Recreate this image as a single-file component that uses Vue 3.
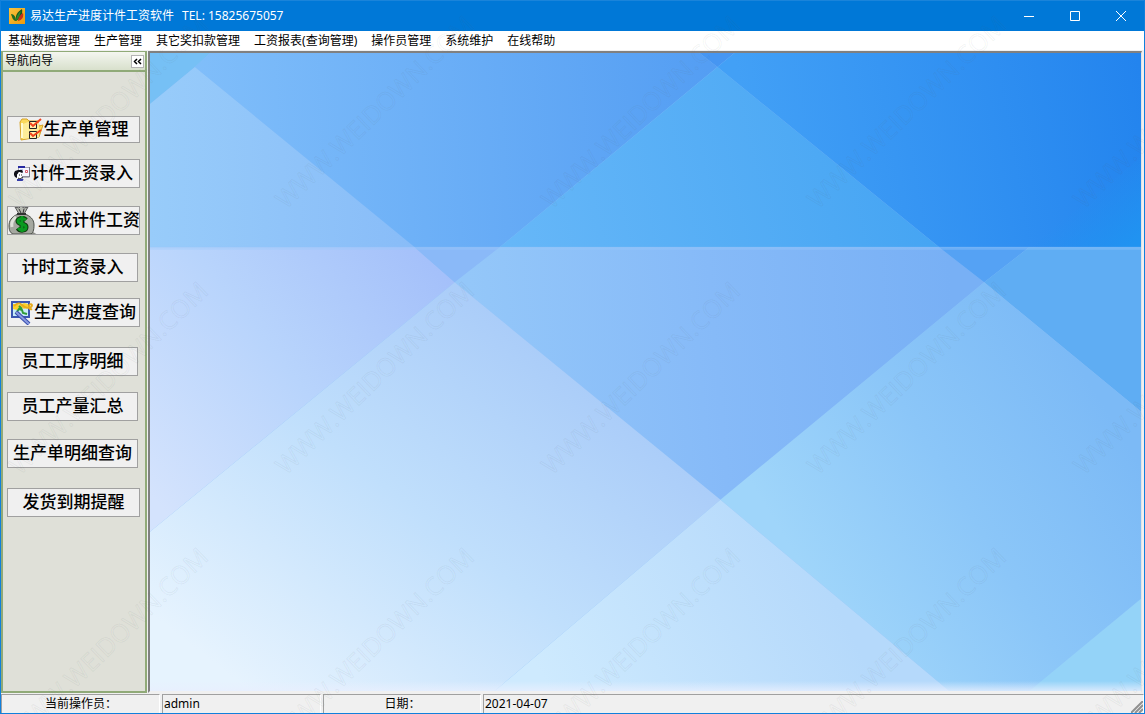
<script setup>
const menus = ['基础数据管理', '生产管理', '其它奖扣款管理', '工资报表(查询管理)', '操作员管理', '系统维护', '在线帮助']

const actions = [
  { label: '生产单管理', icon: 'folder', size: 'wide short', space: 'gap-first' },
  { label: '计件工资录入', icon: 'entry', size: 'wide', space: 'gap-s' },
  { label: '生成计件工资', icon: 'money', size: 'wide', space: 'gap-m' },
  { label: '计时工资录入', icon: '', size: '', space: 'gap-m' },
  { label: '生产进度查询', icon: 'search', size: 'wide', space: 'gap-s' },
  { label: '员工工序明细', icon: '', size: '', space: 'gap-l' },
  { label: '员工产量汇总', icon: '', size: '', space: 'gap-s' },
  { label: '生产单明细查询', icon: '', size: '', space: 'gap-m' },
  { label: '发货到期提醒', icon: '', size: 'wide', space: 'gap-l' }
]

const marks = []
for (let row = 0; row < 4; row++) {
  for (let col = -1; col < 5; col++) marks.push({ x: 19 + col * 266, y: 210 + row * 266 })
}
</script>

<template>
  <div class="window">
    <header class="titlebar">
      <svg class="logo" viewBox="0 0 16 16" aria-hidden="true">
        <defs>
          <linearGradient id="gold" x1="0" y1="0" x2="1" y2="1">
            <stop offset="0" stop-color="#f9c440" /><stop offset="1" stop-color="#ee9a0c" />
          </linearGradient>
        </defs>
        <rect width="16" height="16" fill="url(#gold)" />
        <path d="M2 6c3 0 5 3 5 7C4 13 3 9 2 6z" fill="#1d6b22" />
        <path d="M7 13c-1-5 1-9 6-12 1 5-1 9-6 12z" fill="#17551d" />
        <path d="M9 13c0-4 2-6 5-8 1 4-1 7-5 8z" fill="#c5301c" />
        <path d="M7 13c0-4 2-8 5-10-1 4-2 7-5 10z" fill="#2b8a2d" />
      </svg>
      <h1><span>易达生产进度计件工资软件</span><span>TEL: 15825675057</span></h1>
      <div class="controls">
        <button type="button" aria-label="最小化">
          <svg viewBox="0 0 10 10"><path d="M0 5.5h10" /></svg>
        </button>
        <button type="button" aria-label="最大化">
          <svg viewBox="0 0 10 10"><path d="M.5 .5h9v9h-9z" /></svg>
        </button>
        <button type="button" aria-label="关闭">
          <svg viewBox="0 0 10 10"><path d="M0 0l10 10M10 0L0 10" /></svg>
        </button>
      </div>
    </header>

    <nav class="menubar">
      <button v-for="m in menus" :key="m" type="button">{{ m }}</button>
    </nav>

    <main class="body">
      <aside class="sidebar">
        <div class="side-head">
          <h2>导航向导</h2>
          <button type="button" class="collapse" aria-label="收起">
            <svg viewBox="0 0 9 7"><path d="M4 1L1.500 3.500 4 6M8 1L5.500 3.500 8 6" /></svg>
          </button>
        </div>
        <div class="side-body">
          <button v-for="a in actions" :key="a.label" type="button" class="action" :class="[a.size, a.space, a.icon]">
            <svg v-if="a.icon === 'folder'" class="icon" width="25" height="23" viewBox="0 0 25 23" aria-hidden="true">
              <path d="M1 4l2-3h5l2 2h9l1 5 4-1-4 12-18 3z" fill="#fbd95c" stroke="#d6a32a" />
              <path d="M4 6l5-2 11 1v14L4 21z" fill="#fdec98" />
              <path d="M3 5v15" stroke="#fffad0" stroke-width="2" />
              <path d="M10.500 3.500h7v7h-7zM10.500 13.500h7v7h-7z" fill="#fff2b0" stroke="#222" />
              <path d="M11 5l3 3 8-7M11 15l3 3 8-6" fill="none" stroke="#f0431c" stroke-width="2" />
            </svg>
            <svg v-else-if="a.icon === 'entry'" class="icon" width="17" height="16" viewBox="0 0 17 16" aria-hidden="true">
              <path d="M4.500 1.500h11v9h-11z" fill="#f4f6ff" stroke="#a5a5b2" />
              <path d="M4 0h7v2H4z" fill="#2629a0" />
              <path d="M15.500 1v10H9" fill="none" stroke="#787888" />
              <path d="M6 4h3M6 6h3" stroke="#8898d0" />
              <path d="M11.500 4.500h2v2h-2z" fill="#fff" stroke="#d85868" />
              <path d="M0 7l1-2 3-1h4l1 2-1 1-3-1-2 3v3l-2-1-1-2z" fill="#101018" />
              <path d="M3 9l2-3 3 1v4l-2 2-3-1z" fill="#fff" />
              <path d="M5 9h1M7 9h1M4 12l2 1 3-2" fill="none" stroke="#222" />
              <path d="M3 14h5l1-1" fill="none" stroke="#343ca8" stroke-width="2" />
            </svg>
            <svg v-else-if="a.icon === 'money'" class="icon" width="30" height="30" viewBox="0 0 30 30" aria-hidden="true">
              <path d="M8 29h22l-5-3z" fill="#8b8d86" />
              <path d="M7 1l4 1 2-2 3 2 4-1-4 7h-5z" fill="#b5b8b0" stroke="#555" />
              <path d="M11 3l2 4M16 3l-1 4" stroke="#333" />
              <path d="M10 8C3 11 1 15 1 20c0 5 2 8 5 8h16c3 0 4-4 4-9 0-6-4-9-9-11z" fill="#a5a8a0" stroke="#4c504a" />
              <path d="M8 11c-4 3-5 6-4 10" fill="none" stroke="#dfe1da" stroke-width="3" />
              <path d="M9 8h9" stroke="#333" stroke-width="2" />
              <path d="M18 14c-2-2-8-2-8 1 0 4 8 2 8 6 0 4-6 4-8 1M14 10v16" fill="none" stroke="#10380f" stroke-width="5" />
              <path d="M18 14c-2-2-8-2-8 1 0 4 8 2 8 6 0 4-6 4-8 1M14 10v16" fill="none" stroke="#0a9a20" stroke-width="3" />
            </svg>
            <svg v-else-if="a.icon === 'search'" class="icon" width="23" height="24" viewBox="0 0 23 24" aria-hidden="true">
              <rect x="1" y="1" width="17" height="15" fill="#c8ecf8" stroke="#3a56b0" stroke-width="2" />
              <path d="M2 8V3h4l3 1 4-2 4 1v3l-4 2-3-2-4 3z" fill="#fbd02c" />
              <path d="M5 12l3-4 3 1 1 3 4 1M8 5l3 3" fill="none" stroke="#309c38" stroke-width="2" />
              <path d="M3 5c4-4 6-3 8-1s6 4 9 2c3-3-2-4-2-1 0 2 1 4 3 3" fill="none" stroke="#e8ac1c" stroke-width="2" />
              <path d="M5 11l13 12" stroke="#354cad" stroke-width="4" />
              <path d="M5 11l13 12" stroke="#8a9be0" stroke-width="2" />
            </svg>
            <span>{{ a.label }}</span>
          </button>
        </div>
      </aside>

      <section class="workspace">
        <svg class="wallpaper" viewBox="0 0 992 637" preserveAspectRatio="none" aria-hidden="true">
          <defs>
            <linearGradient id="w2" x1="0" x2="1"><stop stop-color="#98ccfa" /><stop offset="1" stop-color="#88bcf8" /></linearGradient>
            <linearGradient id="w3" gradientUnits="userSpaceOnUse" x1="45" y1="60" x2="560" y2="30"><stop stop-color="#80befa" /><stop offset="1" stop-color="#549ef3" /></linearGradient>
            <linearGradient id="w4" gradientUnits="userSpaceOnUse" x1="360" y1="190" x2="760" y2="100"><stop stop-color="#66b7f8" /><stop offset="1" stop-color="#46a5f3" /></linearGradient>
            <linearGradient id="w5" gradientUnits="userSpaceOnUse" x1="600" y1="90" x2="992" y2="20"><stop stop-color="#42a0f6" /><stop offset="1" stop-color="#2384ee" /></linearGradient>
            <linearGradient id="w5b" gradientUnits="userSpaceOnUse" x1="940" y1="140" x2="985" y2="190"><stop stop-color="#2093f1" stop-opacity="0" /><stop offset="1" stop-color="#2093f1" /></linearGradient>
            <linearGradient id="w6" gradientUnits="userSpaceOnUse" x1="290" y1="210" x2="0" y2="440"><stop stop-color="#a4c0fa" /><stop offset=".5" stop-color="#b8d4fc" /><stop offset="1" stop-color="#d4e3fd" /></linearGradient>
            <linearGradient id="w8" gradientUnits="userSpaceOnUse" x1="320" y1="240" x2="800" y2="200"><stop stop-color="#94c7f9" /><stop offset=".5" stop-color="#86baf8" /><stop offset="1" stop-color="#78b0f5" /></linearGradient>
            <linearGradient id="w11" gradientUnits="userSpaceOnUse" x1="670" y1="540" x2="960" y2="360"><stop stop-color="#9fd5fa" /><stop offset=".5" stop-color="#8bc6f8" /><stop offset="1" stop-color="#7cbaf6" /></linearGradient>
            <linearGradient id="w13" gradientUnits="userSpaceOnUse" x1="400" y1="250" x2="100" y2="637"><stop stop-color="#a6c9f8" /><stop offset=".5" stop-color="#c0dffc" /><stop offset="1" stop-color="#e6f3fe" /></linearGradient>
            <linearGradient id="w14" gradientUnits="userSpaceOnUse" x1="400" y1="637" x2="660" y2="500"><stop stop-color="#ceeafe" /><stop offset="1" stop-color="#b5d9fb" /></linearGradient>
            <linearGradient id="fade" x2="0" y2="1"><stop stop-color="#e8effe" stop-opacity="0" /><stop offset="1" stop-color="#e8effe" stop-opacity=".8" /></linearGradient>
          </defs>
          <rect width="992" height="637" fill="#8bbef8" />
          <path d="M0 0h60L45 14 0 51z" fill="#76c0f5" />
          <path d="M0 51L45 14 265 194H0z" fill="url(#w2)" />
          <path d="M60 0h490l18 14-218 180h-85L45 14z" fill="url(#w3)" />
          <path d="M550 0h35l-17 14z" fill="#4696f2" />
          <path d="M568 14l222 180H350z" fill="url(#w4)" />
          <path d="M585 0h407v194H790L568 14z" fill="url(#w5)" />
          <path d="M992 104v90H880z" fill="url(#w5b)" />
          <path d="M0 194h265l40 35L0 478z" fill="url(#w6)" />
          <path d="M265 194h85l-45 35z" fill="#8ab9f8" />
          <path d="M350 194h440l45 35-264 217-266-217z" fill="url(#w8)" />
          <path d="M790 194h90l-45 35z" fill="#55a2f4" />
          <path d="M880 194h112v164L835 229z" fill="#5fadf3" />
          <path d="M835 229l157 129v187l-112 92h-80L571 446z" fill="url(#w11)" />
          <path d="M992 545v92H880z" fill="#94d3f8" />
          <path d="M305 229l266 217-226 191H0V478z" fill="url(#w13)" />
          <path d="M571 446l229 191H345z" fill="url(#w14)" />
          <path d="M0 195h992" stroke="#9ac8fa" stroke-opacity=".35" stroke-width="3" />
          <rect y="627" width="992" height="10" fill="url(#fade)" />
        </svg>
      </section>
    </main>

    <footer class="status">
      <div class="cell label">当前操作员：</div>
      <div class="cell">admin</div>
      <div class="cell label">日期：</div>
      <div class="cell last">
        <span>2021-04-07</span>
        <svg class="grip" viewBox="0 0 12 12" aria-hidden="true"><path d="M0 12L12 0M4 12l8-8M8 12l4-4" /></svg>
      </div>
    </footer>

    <svg class="watermark" aria-hidden="true">
      <g v-for="(m, i) in marks" :key="i" :transform="`translate(${m.x} ${m.y}) rotate(-44)`">
        <text>WWW.WEIDOWN.COM</text>
      </g>
    </svg>
  </div>
</template>

<style>
body { margin: 0; }
</style>

<style scoped>
* { box-sizing: border-box; }
.window {
  position: relative;
  display: flex;
  flex-direction: column;
  min-height: 100vh;
  overflow: hidden;
  background: #f0f0f0;
  border: 1px solid #1080dc;
  border-top: 0;
  font: 12px/16px "Noto Sans", "Noto Sans CJK SC", sans-serif;
  color: #000;
}
button { font: inherit; color: inherit; padding: 0; margin: 0; border: 0; background: none; }
h1, h2 { margin: 0; font: inherit; }
.titlebar {
  display: flex;
  align-items: center;
  height: 31px;
  padding-left: 8px;
  background: #0078d7;
  border-top: 1px solid #1a84da;
  color: #fff;
}
.titlebar h1 { display: flex; gap: 8px; }
.logo { width: 16px; height: 16px; margin-right: 5px; }
.controls { display: flex; margin-left: auto; align-self: stretch; }
.controls button { width: 46px; display: flex; align-items: center; justify-content: center; }
.controls svg { width: 10px; height: 10px; overflow: visible; fill: none; stroke: #fff; }
.menubar {
  display: flex;
  align-items: center;
  gap: 14px;
  height: 20px;
  padding-left: 7px;
  background: #fff;
  border-bottom: 1px solid #f0f0f0;
}
.menubar button { white-space: nowrap; }
.body { flex: 1; display: flex; }
.sidebar {
  display: flex;
  flex-direction: column;
  width: 146px;
  border: 2px solid #90aa78;
  border-top-width: 1px;
}
.side-head {
  display: flex;
  align-items: center;
  justify-content: space-between;
  height: 20px;
  padding: 0 1px 0 2px;
  background: linear-gradient(#f4f6f0, #d8e0cc);
  border-bottom: 2px solid #90aa78;
}
.collapse {
  display: flex;
  align-items: center;
  justify-content: center;
  width: 13px;
  height: 13px;
  background: #fff;
  border: 1px solid #b4b4b4;
}
.collapse svg { flex: none; width: 9px; height: 7px; fill: none; stroke: #000; stroke-width: 1.5; }
.side-body {
  flex: 1;
  display: flex;
  flex-direction: column;
  align-items: flex-start;
  padding-left: 4px;
  background: #dfe0d8;
}
.action {
  display: flex;
  align-items: center;
  justify-content: center;
  width: 131px;
  height: 29px;
  overflow: hidden;
  background: #f0f0f0;
  border: 1px solid #a0a0a0;
  font-size: 17px;
  line-height: 24px;
  font-weight: 500;
  white-space: nowrap;
}
.action span { padding-bottom: 2px; }
.wide { width: 133px; }
.short { height: 27px; }
.icon { flex: none; }
.money { justify-content: flex-start; }
.gap-first { margin-top: 44px; }
.gap-s { margin-top: 16px; }
.gap-m { margin-top: 18px; }
.gap-l { margin-top: 20px; }
.workspace {
  flex: 1;
  display: flex;
  margin: 0 2px 0 1px;
  border: solid;
  border-width: 2px 1px 2px 2px;
  border-color: #808080 #e3e3e3 #f0f0f0 #808080;
}
.wallpaper { flex: 1; width: 100%; min-width: 0; height: 100%; display: block; }
.status { display: grid; grid-template-columns: 159px 159px 158px 1fr; column-gap: 2px; height: 20px; padding-top: 1px; }
.cell { padding-left: 1px; line-height: 18px; border: 1px solid #fff; border-top-color: #a0a0a0; border-left-color: #a0a0a0; }
.label { text-align: center; }
.last { display: flex; justify-content: space-between; align-items: flex-end; }
.grip { width: 12px; height: 12px; stroke: #909090; stroke-width: 2; }
.watermark { position: absolute; inset: 0; width: 100%; height: 100%; pointer-events: none; }
.watermark text {
  font: 25px "Open Sans", sans-serif;
  fill: rgba(90, 100, 110, .02);
  stroke: rgba(90, 100, 110, .07);
}
</style>
